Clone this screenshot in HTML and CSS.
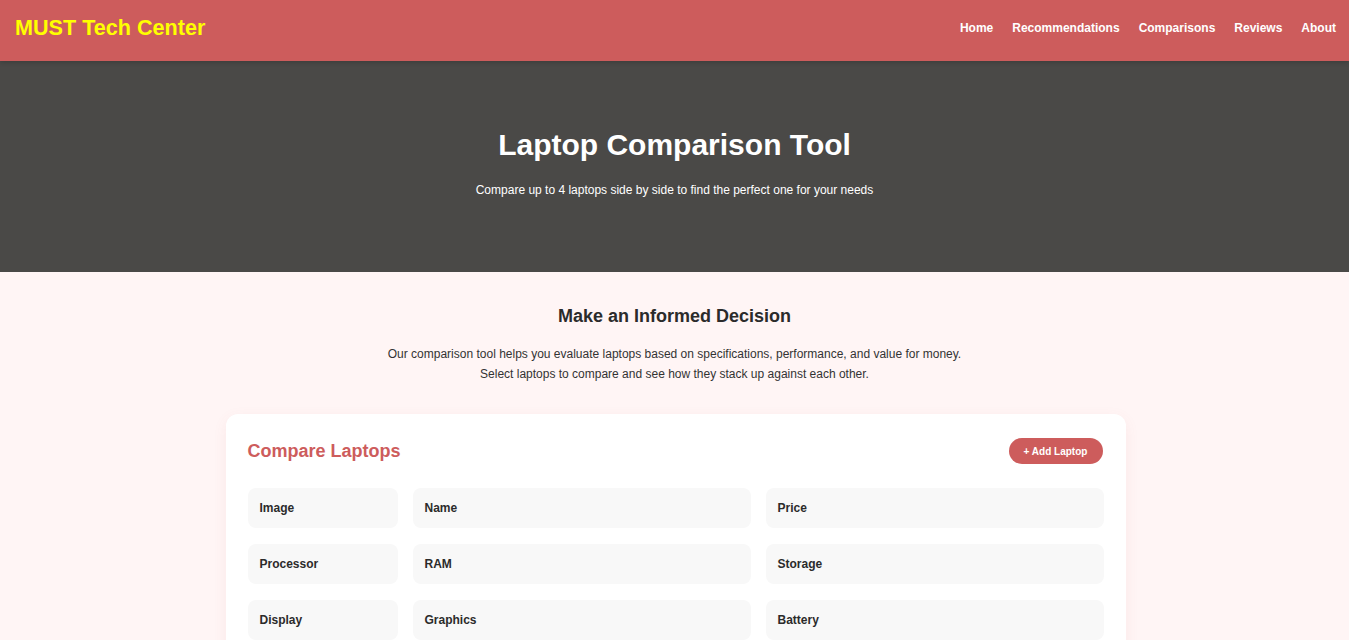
FILE: index.html
```html
<!DOCTYPE html>
<html lang="en">
<head>
<meta charset="utf-8">
<title>Laptop Comparison Tool - MUST Tech Center</title>
<link rel="stylesheet" href="styles.css">
</head>
<body>
<header class="site-header">
  <div class="logo">MUST Tech Center</div>
  <nav class="nav">
    <a href="#">Home</a>
    <a href="#">Recommendations</a>
    <a href="#">Comparisons</a>
    <a href="#">Reviews</a>
    <a href="#">About</a>
  </nav>
</header>
<section class="hero">
  <h1>Laptop Comparison Tool</h1>
  <p>Compare up to 4 laptops side by side to find the perfect one for your needs</p>
</section>
<main class="main">
  <h2 class="intro-title">Make an Informed Decision</h2>
  <p class="intro-text">Our comparison tool helps you evaluate laptops based on specifications, performance, and value for money.<br>Select laptops to compare and see how they stack up against each other.</p>
  <div class="card">
    <div class="card-head">
      <h3 class="card-title">Compare Laptops</h3>
      <button class="add-btn">+ Add Laptop</button>
    </div>
    <div class="grid">
      <div class="cell">Image</div>
      <div class="cell">Name</div>
      <div class="cell">Price</div>
      <div class="cell">Processor</div>
      <div class="cell">RAM</div>
      <div class="cell">Storage</div>
      <div class="cell">Display</div>
      <div class="cell">Graphics</div>
      <div class="cell">Battery</div>
    </div>
  </div>
</main>
</body>
</html>
```
FILE: styles.css
```css
* { box-sizing: border-box; }
html, body {
  margin: 0;
  padding: 0;
}
body {
  font-family: "Liberation Sans", Arial, sans-serif;
  background: #fff5f5;
  color: #333;
}
.site-header {
  height: 61px;
  background: #cd5c5c;
  display: flex;
  align-items: center;
  justify-content: space-between;
  padding: 0 13px 6px 15px;
  box-shadow: 0 2px 4px rgba(0,0,0,0.15);
  position: relative;
  z-index: 1;
}
.logo {
  color: #ffff00;
  font-weight: bold;
  font-size: 21.6px;
}
.nav {
  display: flex;
  gap: 19px;
  padding-top: 1px;
}
.nav a {
  color: #fff;
  text-decoration: none;
  font-weight: bold;
  font-size: 12px;
}
.hero {
  background: #4a4947;
  color: #fff;
  text-align: center;
  padding: 65px 20px 75px;
}
.hero h1 {
  margin: 0 0 20px;
  font-size: 30px;
  line-height: 37px;
  font-weight: bold;
}
.hero p {
  margin: 0;
  font-size: 12px;
  line-height: 14px;
}
.main {
  padding: 33px 20px 40px;
  text-align: center;
}
.intro-title {
  margin: 0 0 17px;
  font-size: 18px;
  line-height: 22px;
  font-weight: bold;
  color: #2b2b2b;
}
.intro-text {
  margin: 0 0 30px;
  font-size: 12px;
  line-height: 20px;
  color: #333;
}
.card {
  width: 900px;
  margin: 0 auto;
  background: #fff;
  border-radius: 12px;
  box-shadow: 0 4px 14px rgba(205,92,92,0.08);
  padding: 24px 22px;
  text-align: left;
  transform: translateX(1px);
}
.card-head {
  display: flex;
  align-items: center;
  justify-content: space-between;
  margin-bottom: 24px;
  height: 26px;
}
.card-title {
  margin: 0;
  color: #cd5c5c;
  font-size: 18px;
  font-weight: bold;
}
.add-btn {
  background: #cd5c5c;
  color: #fff;
  border: none;
  border-radius: 13px;
  height: 26px;
  width: 94px;
  font-family: inherit;
  font-weight: bold;
  font-size: 10px;
  padding: 0;
  margin-right: 1px;
}
.grid {
  display: grid;
  grid-template-columns: 150px 1fr 1fr;
  column-gap: 15px;
  row-gap: 16px;
}
.cell {
  background: #f8f8f8;
  border-radius: 8px;
  padding: 12px;
  font-size: 12px;
  line-height: 16px;
  font-weight: bold;
  color: #2b2b2b;
}
```
